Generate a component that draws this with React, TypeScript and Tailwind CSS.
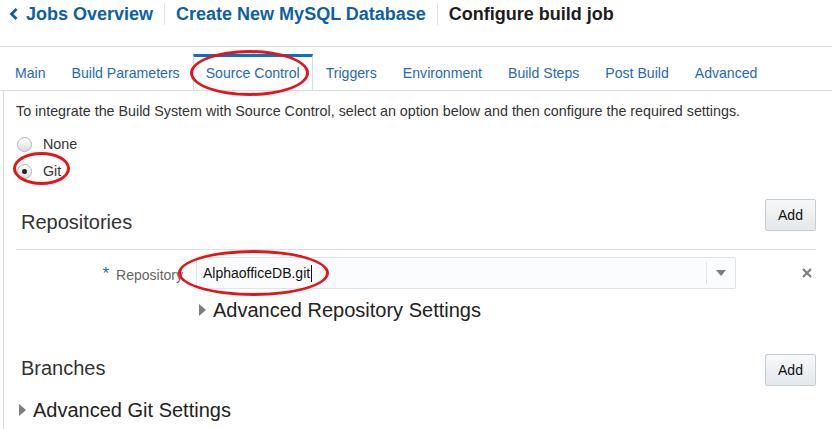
import React from 'react'

const tabs = ['Main', 'Build Parameters', 'Source Control', 'Triggers', 'Environment', 'Build Steps', 'Post Build', 'Advanced']

const Radio = ({ checked, label }: { checked?: boolean; label: string }) => (
  <div className="flex items-center h-[27px]">
    <div className="ml-[13px] w-[15px] h-[15px] rounded-full border border-[#b5b5b5] bg-gradient-to-b from-[#ffffff] to-[#dcdcdc] flex items-center justify-center">
      {checked && <div className="w-[5px] h-[5px] rounded-full bg-[#222]" />}
    </div>
    <span className="ml-[11px] text-[14.3px] text-[#333]">{label}</span>
  </div>
)

const AddButton = () => (
  <button className="w-[51px] h-[32px] rounded-[2px] border border-[#c4ced7] bg-gradient-to-b from-[#f7f8f9] to-[#e4e8ea] text-[14px] text-[#111]">
    Add
  </button>
)

const Triangle = () => (
  <svg width="8" height="12" viewBox="0 0 8 12" className="shrink-0">
    <polygon points="0,0 7,6 0,12" fill="#7c7f82" />
  </svg>
)

const Ellipse = ({ className }: { className: string }) => (
  <div className={`absolute rounded-[50%] border-[3px] border-[#e5141b] pointer-events-none ${className}`} />
)

export default function App() {
  return (
    <div className="relative w-[832px] h-[429px] overflow-hidden bg-white" style={{ fontFamily: '"Liberation Sans", Arial, sans-serif' }}>
      {/* header */}
      <div className="h-[47px] border-b border-[#d6dfe6]">
        <div className="flex items-center h-[28px] text-[18px] font-bold">
          <svg width="10" height="14" viewBox="0 0 10 14" className="ml-[9px] mr-[7px]">
            <polyline points="7.5,2 2.5,7 7.5,12" fill="none" stroke="#0d5fa6" strokeWidth="2.8" />
          </svg>
          <span className="text-[#0d5fa6]">Jobs Overview</span>
          <div className="w-px h-[22px] bg-[#dfe4e7] mx-[11px]" />
          <span className="text-[#0d5fa6]">Create New MySQL Database</span>
          <div className="w-px h-[22px] bg-[#dfe4e7] mx-[11px]" />
          <span className="text-[#1d1d1d]">Configure build job</span>
        </div>
      </div>

      {/* tabs */}
      <div className="flex pl-[2px] mt-[7px] border-b border-[#d6dfe6]">
        {tabs.map((t) =>
          t === 'Source Control' ? (
            <div key={t} className="h-[36px] -mb-px px-[12px] flex items-center bg-white border-t-[3px] border-t-[#0572ce] border-x border-x-[#d6dfe6] text-[14.1px] text-[#1f6ab4]">
              {t}
            </div>
          ) : (
            <div key={t} className="h-[36px] px-[13px] flex items-center pt-[3px] text-[14.1px] text-[#1f6ab4]">
              {t}
            </div>
          )
        )}
      </div>

      {/* panel */}
      <div className="ml-[3px] border-l border-[#d6dfe6] h-[340px]">
        <div className="pl-[12px] pt-[12px] text-[14.3px] text-[#333] leading-[17px]">
          To integrate the Build System with Source Control, select an option below and then configure the required settings.
        </div>
        <div className="mt-[11px]">
          <Radio label="None" />
          <Radio checked label="Git" />
        </div>

        {/* repositories */}
        <div className="ml-[12px] w-[800px] h-[51px] mt-[14px] flex items-start justify-between border-b border-[#d6dfe6]">
          <span className="pl-[5px] mt-[11px] text-[20px] text-[#333] leading-[24px]">Repositories</span>
          <AddButton />
        </div>

        <div className="flex items-center mt-[7px] h-[32px]">
          <div className="w-[179px] flex justify-end items-center text-[14px]">
            <span className="text-[#1f6ab4] text-[17px] mr-[7px] mt-[2px]">*</span>
            <span className="text-[#666] mt-[4px]">Repository</span>
          </div>
          <div className="ml-[13px] w-[540px] h-[32px] border border-[#dfe4e7] rounded-[2px] bg-[#fbfcfd] flex items-center">
            <span className="pl-[6px] text-[14px] text-[#111] flex-1">
              AlphaofficeDB.git<span className="inline-block w-px h-[17px] bg-[#111] align-middle ml-px" />
            </span>
            <div className="w-px h-[22px] bg-[#dfe4e7]" />
            <svg width="28" height="10" viewBox="0 0 28 10">
              <polygon points="9,2 19,2 14,8" fill="#7c7f82" />
            </svg>
          </div>
          <svg width="10" height="10" viewBox="0 0 10 10" className="ml-[66px]">
            <path d="M1 1 L9 9 M9 1 L1 9" stroke="#7c7f82" strokeWidth="2.2" />
          </svg>
        </div>

        <div className="flex items-center gap-[6px] ml-[195px] mt-[9px] h-[24px]">
          <Triangle />
          <span className="text-[20px] text-[#222] leading-[24px]">Advanced Repository Settings</span>
        </div>

        {/* branches */}
        <div className="ml-[12px] w-[800px] h-[32px] mt-[32px] flex items-start justify-between">
          <span className="pl-[5px] mt-[2px] text-[20px] text-[#333] leading-[24px]">Branches</span>
          <AddButton />
        </div>
        <div className="flex items-center gap-[6px] ml-[15px] mt-[12px] h-[24px]">
          <Triangle />
          <span className="text-[20px] text-[#222] leading-[24px]">Advanced Git Settings</span>
        </div>
      </div>

      <Ellipse className="left-[190px] top-[50px] w-[119px] h-[46px]" />
      <Ellipse className="left-[13px] top-[152px] w-[57px] h-[33px]" />
      <Ellipse className="left-[178px] top-[250px] w-[151px] h-[46px]" />
    </div>
  )
}
